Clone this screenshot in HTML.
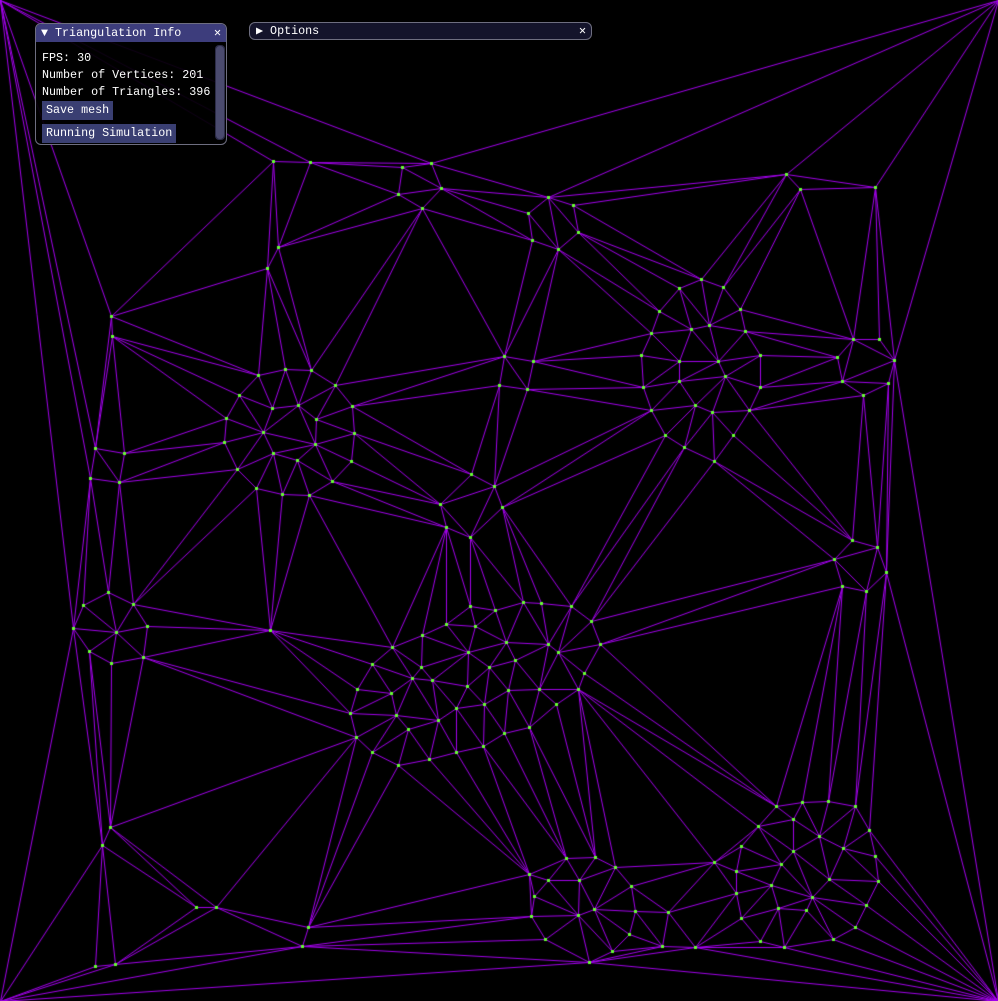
<!DOCTYPE html>
<html><head><meta charset="utf-8">
<style>
html,body{margin:0;padding:0;background:#000;width:998px;height:1001px;overflow:hidden;}
canvas{position:absolute;left:0;top:0;}
.mono{font-family:"Liberation Mono","DejaVu Sans Mono",monospace;font-size:11.7px;color:#fff;}
#win{position:absolute;left:35px;top:23px;width:192px;height:122px;border:1px solid #6e6e80;border-radius:6px;background:rgba(0,0,0,0.9);box-sizing:border-box;overflow:hidden;}
#win .title{height:18px;background:#3d3d7c;line-height:18px;padding-left:5px;position:relative;}
#win .x{position:absolute;right:5px;top:0;}
#win .ln{position:absolute;left:6px;white-space:pre;}
.btn{position:absolute;left:6px;background:#3a3f72;height:19px;line-height:19px;padding:0 4px;}
#sb{position:absolute;left:179px;top:21px;width:10px;height:95px;background:#2c2c48;border-radius:4px;}
#sb div{position:absolute;left:1px;top:1px;width:8px;height:93px;background:#4a4a6e;border-radius:4px;}
#opt{position:absolute;left:249px;top:22px;width:343px;height:18px;border:1px solid #6e6e80;border-radius:6px;background:#14142b;box-sizing:border-box;line-height:16px;padding-left:6px;}
#opt .x{position:absolute;right:5px;top:0;}
</style></head><body>
<canvas id="c" width="998" height="1001"></canvas>
<div id="win" class="mono">
<div class="title">▼ Triangulation Info<span class="x">✕</span></div>
<div class="ln" style="top:27px">FPS: 30</div>
<div class="ln" style="top:44px">Number of Vertices: 201</div>
<div class="ln" style="top:61px">Number of Triangles: 396</div>
<div class="btn" style="top:77px">Save mesh</div>
<div class="btn" style="top:100px">Running Simulation</div>
<div id="sb"><div></div></div>
</div>
<div id="opt" class="mono">▶ Options<span class="x">✕</span></div>
<script>
var P=[[0,0],[998,0],[0,1001],[998,1001],
[273,161],[310,162],[402,167],[431,163],[398,194],[441,188],[422,208],[548,197],[573,205],[528,213],[578,232],[532,240],[558,249],[786,174],[800,189],[875,187],[278,247],[267,268],[111,316],[112,336],[701,279],[679,288],[723,287],[659,311],[740,309],[651,333],[691,329],[709,325],[745,331],[853,339],[879,339],[894,360],[641,355],[679,361],[718,361],[760,355],[837,357],[504,356],[533,361],[258,375],[285,369],[311,370],[335,385],[499,385],[527,389],[643,387],[679,381],[725,376],[760,387],[842,381],[888,383],[863,395],[239,395],[272,408],[298,405],[352,406],[226,418],[263,432],[316,419],[651,410],[695,405],[712,412],[749,410],[224,442],[315,444],[354,433],[95,448],[124,453],[665,435],[684,447],[733,435],[273,453],[351,461],[237,469],[297,460],[332,481],[471,474],[494,486],[90,478],[119,482],[714,461],[256,488],[282,494],[309,495],[440,504],[502,507],[446,527],[470,537],[852,540],[877,547],[834,559],[886,572],[842,586],[866,591],[108,592],[133,604],[83,605],[73,628],[116,632],[147,626],[270,630],[89,651],[111,663],[143,657],[470,606],[495,610],[523,602],[541,603],[571,606],[591,621],[446,624],[475,626],[422,635],[392,647],[506,642],[548,644],[600,644],[372,664],[468,652],[421,667],[558,652],[515,660],[489,667],[412,678],[357,689],[391,693],[432,680],[467,686],[584,673],[508,690],[539,689],[578,689],[350,713],[396,715],[456,708],[484,704],[556,704],[438,720],[529,727],[408,729],[356,737],[504,733],[483,746],[456,752],[372,752],[429,759],[398,765],[776,806],[802,802],[828,801],[855,806],[758,826],[793,819],[819,836],[869,830],[110,827],[102,845],[741,846],[793,851],[843,848],[875,856],[566,858],[595,857],[615,867],[714,862],[529,874],[736,871],[781,864],[829,879],[548,880],[579,880],[631,886],[771,885],[878,881],[736,893],[812,897],[534,896],[594,909],[635,911],[578,915],[668,912],[778,908],[806,910],[866,905],[196,907],[216,907],[741,918],[308,927],[531,916],[629,934],[855,927],[545,939],[760,941],[784,947],[833,939],[302,946],[612,951],[662,946],[695,947],[589,962],[95,966],[115,964]];
function circ(a,b,c){var ax=a[0],ay=a[1],bx=b[0],by=b[1],cx=c[0],cy=c[1];var d=2*(ax*(by-cy)+bx*(cy-ay)+cx*(ay-by));var ux=((ax*ax+ay*ay)*(by-cy)+(bx*bx+by*by)*(cy-ay)+(cx*cx+cy*cy)*(ay-by))/d;var uy=((ax*ax+ay*ay)*(cx-bx)+(bx*bx+by*by)*(ax-cx)+(cx*cx+cy*cy)*(bx-ax))/d;return [ux,uy,(ax-ux)*(ax-ux)+(ay-uy)*(ay-uy)];}
var pts=P.slice();var n=pts.length;pts.push([-10000,-10000],[20000,-10000],[500,30000]);
var tris=[[n,n+1,n+2]];tris[0].c=circ(pts[n],pts[n+1],pts[n+2]);
for(var i=0;i<n;i++){var p=pts[i],bad=[],keep=[];
for(var t of tris){var dx=p[0]-t.c[0],dy=p[1]-t.c[1];if(dx*dx+dy*dy<t.c[2])bad.push(t);else keep.push(t);}
var ed={};for(var t of bad){for(var k=0;k<3;k++){var a=t[k],b=t[(k+1)%3];var key=a<b?a+'_'+b:b+'_'+a;ed[key]=(ed[key]||0)+1;}}
for(var key in ed){if(ed[key]==1){var s=key.split('_').map(Number);var nt=[s[0],s[1],i];nt.c=circ(pts[s[0]],pts[s[1]],p);keep.push(nt);}}
tris=keep;}
var cv=document.getElementById('c').getContext('2d');
cv.strokeStyle='#a400ee';cv.lineWidth=1;cv.beginPath();var dn={};
for(var t of tris){if(t[0]>=n||t[1]>=n||t[2]>=n)continue;for(var k=0;k<3;k++){var a=t[k],b=t[(k+1)%3];if(a<4&&b<4)continue;var key=a<b?a+'_'+b:b+'_'+a;if(dn[key])continue;dn[key]=1;cv.moveTo(pts[a][0]+.5,pts[a][1]+.5);cv.lineTo(pts[b][0]+.5,pts[b][1]+.5);}}
cv.stroke();
cv.fillStyle='#66ff33';for(var i=4;i<n;i++){cv.fillRect(P[i][0]-1,P[i][1]-1,3,3);}
</script>
</body></html>
